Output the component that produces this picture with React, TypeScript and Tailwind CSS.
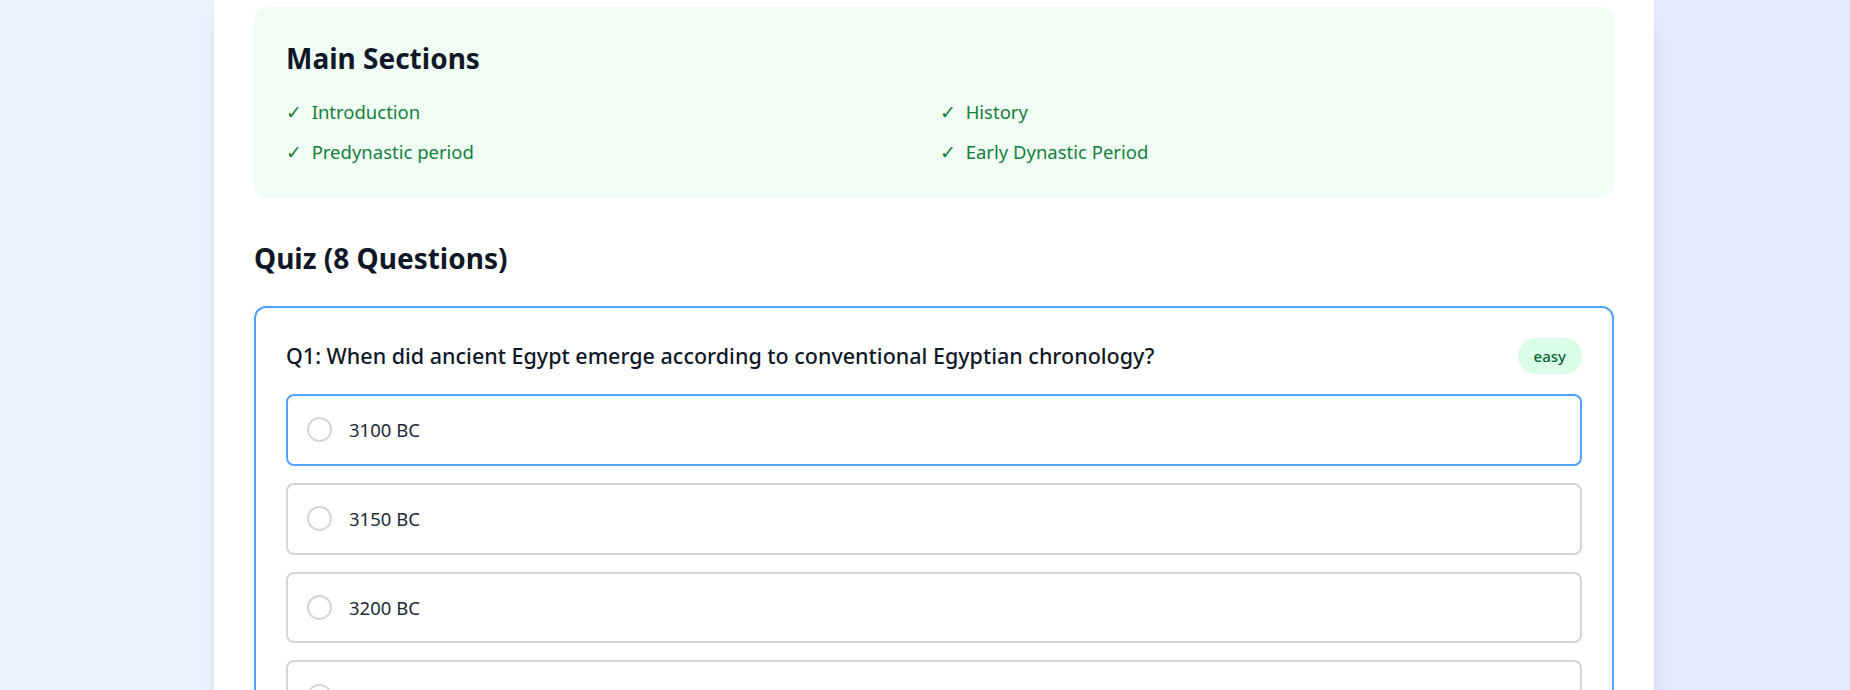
const sections = ["Introduction", "History", "Predynastic period", "Early Dynastic Period"];

const options = ["3100 BC", "3150 BC", "3200 BC", "3000 BC"];

export default function App() {
  return (
    <div
      className="min-h-screen bg-gradient-to-r from-[#ecf2fe] to-[#e4e9fd] pl-[214px]"
      style={{ fontFamily: '"Noto Sans", "Open Sans", sans-serif' }}
    >
      <div className="w-[1440px] bg-white px-10 pt-[7px] pb-10 shadow-xl">
        <div className="mb-[43px] rounded-xl bg-[#f0fdf4] px-8 pt-[33px] pb-[31px]">
          <h2 className="mb-[22px] text-[28px] leading-9 font-bold text-gray-900">Main Sections</h2>
          <ul className="grid grid-cols-2 gap-x-3 gap-y-3">
            {sections.map((s) => (
              <li key={s} className="text-[18.5px] leading-7 text-[#15803d]">
                ✓&nbsp; {s}
              </li>
            ))}
          </ul>
        </div>

        <h2 className="mb-[30px] text-[28px] leading-9 font-bold text-gray-900">Quiz (8 Questions)</h2>

        <div className="rounded-xl border-2 border-blue-400 p-[30px]">
          <div className="mb-5 flex items-center justify-between">
            <h3 className="text-[21.5px] font-medium text-gray-900">
              Q1: When did ancient Egypt emerge according to conventional Egyptian chronology?
            </h3>
            <span className="rounded-full bg-green-100 px-4 py-2 text-[15px] leading-5 font-medium text-green-800">
              easy
            </span>
          </div>
          <div className="space-y-[17px]">
            {options.map((o, i) => (
              <label
                key={o}
                className={`flex items-center gap-[17px] rounded-lg border-2 bg-white py-5 pr-4 pl-[19px] ${
                  i === 0 ? "border-blue-400" : "border-gray-300"
                }`}
              >
                <span className="h-[25px] w-[25px] shrink-0 rounded-full border-2 border-gray-300" />
                <span className="text-[18.5px] text-gray-800">{o}</span>
              </label>
            ))}
          </div>
        </div>
      </div>
    </div>
  );
}
